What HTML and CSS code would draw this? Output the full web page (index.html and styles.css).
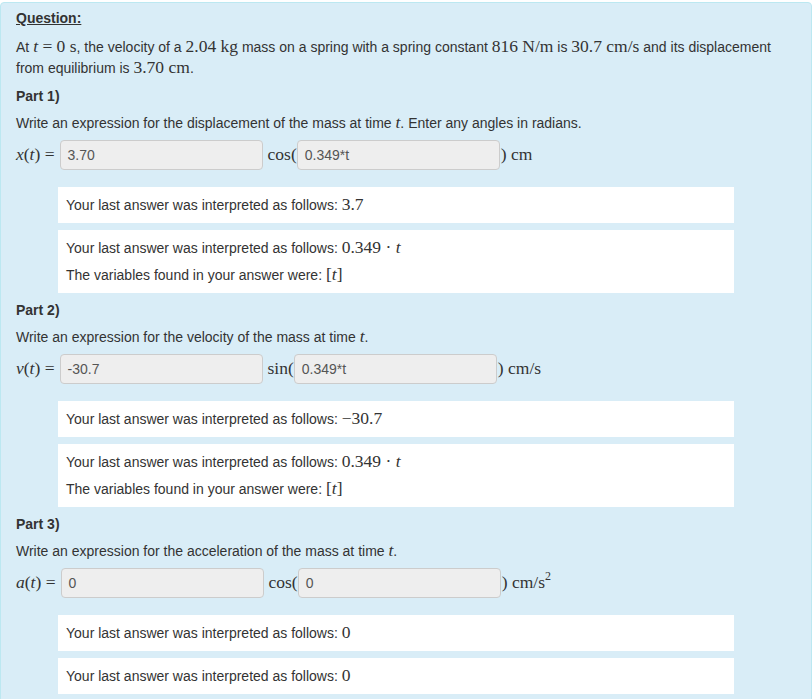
FILE: index.html
```html
<!DOCTYPE html>
<html>
<head>
<meta charset="utf-8">
<link rel="stylesheet" href="styles.css">
</head>
<body>
<div class="panel">
  <div class="q-title">Question:</div>
  <p class="stem">At <span class="m"><i>t</i> = 0 s</span>, the velocity of a <span class="m">2.04 kg</span> mass on a spring with a spring constant <span class="m">816 N/m</span> is <span class="m">30.7 cm/s</span> and its displacement from equilibrium is <span class="m">3.70 cm</span>.</p>

  <div class="part-title">Part 1)</div>
  <p class="prompt">Write an expression for the displacement of the mass at time <span class="m"><i>t</i></span>. Enter any angles in radians.</p>
  <div class="answer-row">
    <span class="m lhs"><i>x</i>(<i>t</i>) =</span>
    <span class="field">3.70</span>
    <span class="m fn">cos(</span>
    <span class="field">0.349*t</span>
    <span class="m unit">) cm</span>
  </div>
  <div class="feedback">
    <p>Your last answer was interpreted as follows: <span class="m">3.7</span></p>
  </div>
  <div class="feedback">
    <p>Your last answer was interpreted as follows: <span class="m">0.349 · <i>t</i></span></p>
    <p>The variables found in your answer were: <span class="m">[<i>t</i>]</span></p>
  </div>

  <div class="part-title">Part 2)</div>
  <p class="prompt">Write an expression for the velocity of the mass at time <span class="m"><i>t</i></span>.</p>
  <div class="answer-row">
    <span class="m lhs"><i>v</i>(<i>t</i>) =</span>
    <span class="field">-30.7</span>
    <span class="m fn">sin(</span>
    <span class="field">0.349*t</span>
    <span class="m unit">) cm/s</span>
  </div>
  <div class="feedback">
    <p>Your last answer was interpreted as follows: <span class="m">−30.7</span></p>
  </div>
  <div class="feedback">
    <p>Your last answer was interpreted as follows: <span class="m">0.349 · <i>t</i></span></p>
    <p>The variables found in your answer were: <span class="m">[<i>t</i>]</span></p>
  </div>

  <div class="part-title">Part 3)</div>
  <p class="prompt">Write an expression for the acceleration of the mass at time <span class="m"><i>t</i></span>.</p>
  <div class="answer-row">
    <span class="m lhs"><i>a</i>(<i>t</i>) =</span>
    <span class="field">0</span>
    <span class="m fn">cos(</span>
    <span class="field">0</span>
    <span class="m unit">) cm/s<sup>2</sup></span>
  </div>
  <div class="feedback">
    <p>Your last answer was interpreted as follows: <span class="m">0</span></p>
  </div>
  <div class="feedback">
    <p>Your last answer was interpreted as follows: <span class="m">0</span></p>
  </div>
</div>
</body>
</html>
```
FILE: styles.css
```css
html, body {
  margin: 0;
  padding: 0;
  background: #ffffff;
}
body {
  font-family: "Liberation Sans", Arial, sans-serif;
  font-size: 14px;
  color: #333333;
}
.panel {
  box-sizing: border-box;
  width: 812px;
  margin-top: 2px;
  background: #d9edf7;
  border: 1px solid #bce8f1;
  border-radius: 4px;
  padding: 5px 15px 20px 15px;
  min-height: 720px;
}
.m {
  font-family: "Liberation Serif", "Times New Roman", serif;
  font-size: 17.5px;
  line-height: 1;
}
.q-title {
  font-weight: bold;
  text-decoration: underline;
  line-height: 20px;
  margin-bottom: 9px;
}
.stem {
  margin: 0;
  line-height: 21px;
}
.part-title {
  font-weight: bold;
  line-height: 20px;
  margin-top: 7px;
}
.prompt {
  margin: 7px 0 0 0;
  line-height: 20px;
}
.answer-row {
  display: flex;
  align-items: center;
  margin-top: 7px;
  height: 30px;
}
.lhs {
  margin-right: 5px;
  white-space: nowrap;
}
.field {
  box-sizing: border-box;
  width: 203px;
  height: 30px;
  line-height: 28px;
  padding: 0 7px;
  background: #eeeeee;
  border: 1px solid #cccccc;
  border-radius: 4px;
  color: #555555;
  font-size: 14px;
  font-family: "Liberation Sans", Arial, sans-serif;
}
.fn {
  margin-left: 5px;
}
.unit {
  margin-left: 1px;
}
.unit sup {
  font-size: 12px;
  line-height: 0;
  vertical-align: 8px;
}
.feedback {
  background: #ffffff;
  margin: 17px 0 0 42px;
  width: 676px;
  box-sizing: border-box;
  padding: 8px 8px;
}
.feedback + .feedback {
  margin-top: 7px;
}
.feedback p {
  margin: 0;
  line-height: 20px;
}
.feedback p + p {
  margin-top: 7px;
}
```
